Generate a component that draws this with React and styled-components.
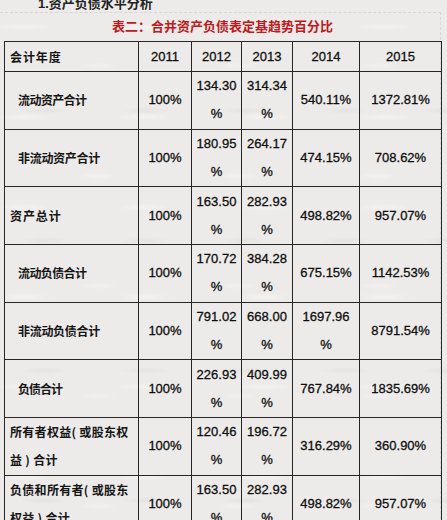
import React from "react";
import styled, { createGlobalStyle } from "styled-components";

const GlobalStyle = createGlobalStyle`
  html, body {
    margin: 0;
    padding: 0;
    background: #ecebe9;
  }
  body {
    font-family: "Liberation Sans", Arial, "Noto Sans CJK SC", sans-serif;
    color: #1a1a1a;
    overflow: hidden;
  }
`;

const Page = styled.div`
  width: 447px;
  height: 520px;
  overflow: hidden;
  background-color: #ecebe9;
  background-image:
    radial-gradient(ellipse 40px 6px at 20% 30%, rgba(255,255,255,0.35), transparent 70%),
    radial-gradient(ellipse 30px 5px at 70% 60%, rgba(255,255,255,0.3), transparent 70%),
    radial-gradient(ellipse 35px 5px at 45% 85%, rgba(0,0,0,0.03), transparent 70%);
  background-size: 120px 90px, 140px 110px, 100px 130px;
`;

const Heading = styled.div`
  margin: -4px 0 0 38px;
  height: 16px;
  font-family: "Liberation Sans", "Noto Sans CJK SC", sans-serif;
  font-weight: 700;
  font-size: 13px;
  line-height: 16px;
  color: #222;
`;

const Frame = styled.div`
  width: 441px;
  border-top: 1px dashed #d6d6d3;
  border-right: 1px dashed #d6d6d3;
  box-sizing: border-box;
`;

const Caption = styled.div`
  margin: 0 0 2px 0;
  padding-left: 112px;
  height: 26px;
  font-family: "Noto Sans CJK SC", sans-serif;
  font-weight: 700;
  font-size: 13px;
  line-height: 26px;
  color: #bd1a22;
  white-space: nowrap;
`;

const Table = styled.table`
  margin-left: 4px;
  border-collapse: collapse;
  table-layout: fixed;
  width: 437px;
`;

const HeadRow = styled.tr`
  height: 30px;
`;

const BodyRow = styled.tr`
  height: 57.7px;
`;

const Cell = styled.td`
  border: 1px solid #262626;
  padding: 0 1px;
  text-align: center;
  vertical-align: middle;
  font-family: "Liberation Sans", Arial, sans-serif;
  font-size: 13px;
  line-height: 28px;
  color: #0e0e0e;
  -webkit-text-stroke: 0.3px #0e0e0e;
  white-space: pre-line;
`;

const LabelCell = styled.td`
  border: 1px solid #262626;
  padding: 0 0 0 ${(p) => p.$indent}px;
  text-align: left;
  vertical-align: middle;
  font-family: "Noto Sans CJK SC", sans-serif;
  font-weight: 700;
  font-size: 12px;
  line-height: 28px;
  letter-spacing: ${(p) => p.$spacing}px;
  color: #151515;
  white-space: pre-line;
`;

const years = ["2011", "2012", "2013", "2014", "2015"];
const widths = [134, 53, 50, 51, 67, 82];

const rows = [
  { label: "流动资产合计", indent: 13, spacing: -0.6, vals: ["100%", "134.30\n%", "314.34\n%", "540.11%", "1372.81%"] },
  { label: "非流动资产合计", indent: 13, spacing: -0.3, vals: ["100%", "180.95\n%", "264.17\n%", "474.15%", "708.62%"] },
  { label: "资产总计", indent: 5, spacing: 0.9, vals: ["100%", "163.50\n%", "282.93\n%", "498.82%", "957.07%"] },
  { label: "流动负债合计", indent: 13, spacing: -0.6, vals: ["100%", "170.72\n%", "384.28\n%", "675.15%", "1142.53%"] },
  { label: "非流动负债合计", indent: 13, spacing: -0.3, vals: ["100%", "791.02\n%", "668.00\n%", "1697.96\n%", "8791.54%"] },
  { label: "负债合计", indent: 13, spacing: -1.0, vals: ["100%", "226.93\n%", "409.99\n%", "767.84%", "1835.69%"] },
  { label: "所有者权益( 或股东权\n益 ) 合计", indent: 5, spacing: 0.3, vals: ["100%", "120.46\n%", "196.72\n%", "316.29%", "360.90%"] },
  { label: "负债和所有者( 或股东\n权益 ) 合计", indent: 5, spacing: 0.3, vals: ["100%", "163.50\n%", "282.93\n%", "498.82%", "957.07%"] },
];

export default function App() {
  return (
    <>
      <GlobalStyle />
      <Page>
        <Heading>1.资产负债水平分析</Heading>
        <Frame>
          <Caption>表二：合并资产负债表定基趋势百分比</Caption>
          <Table>
            <colgroup>
              {widths.map((w, i) => (
                <col key={i} style={{ width: w }} />
              ))}
            </colgroup>
            <tbody>
              <HeadRow>
                <LabelCell $indent={5} $spacing={0.9}>会计年度</LabelCell>
                {years.map((y) => (
                  <Cell key={y}>{y}</Cell>
                ))}
              </HeadRow>
              {rows.map((r, i) => (
                <BodyRow key={i}>
                  <LabelCell $indent={r.indent} $spacing={r.spacing}>{r.label}</LabelCell>
                  {r.vals.map((v, j) => (
                    <Cell key={j}>{v}</Cell>
                  ))}
                </BodyRow>
              ))}
            </tbody>
          </Table>
        </Frame>
      </Page>
    </>
  );
}
